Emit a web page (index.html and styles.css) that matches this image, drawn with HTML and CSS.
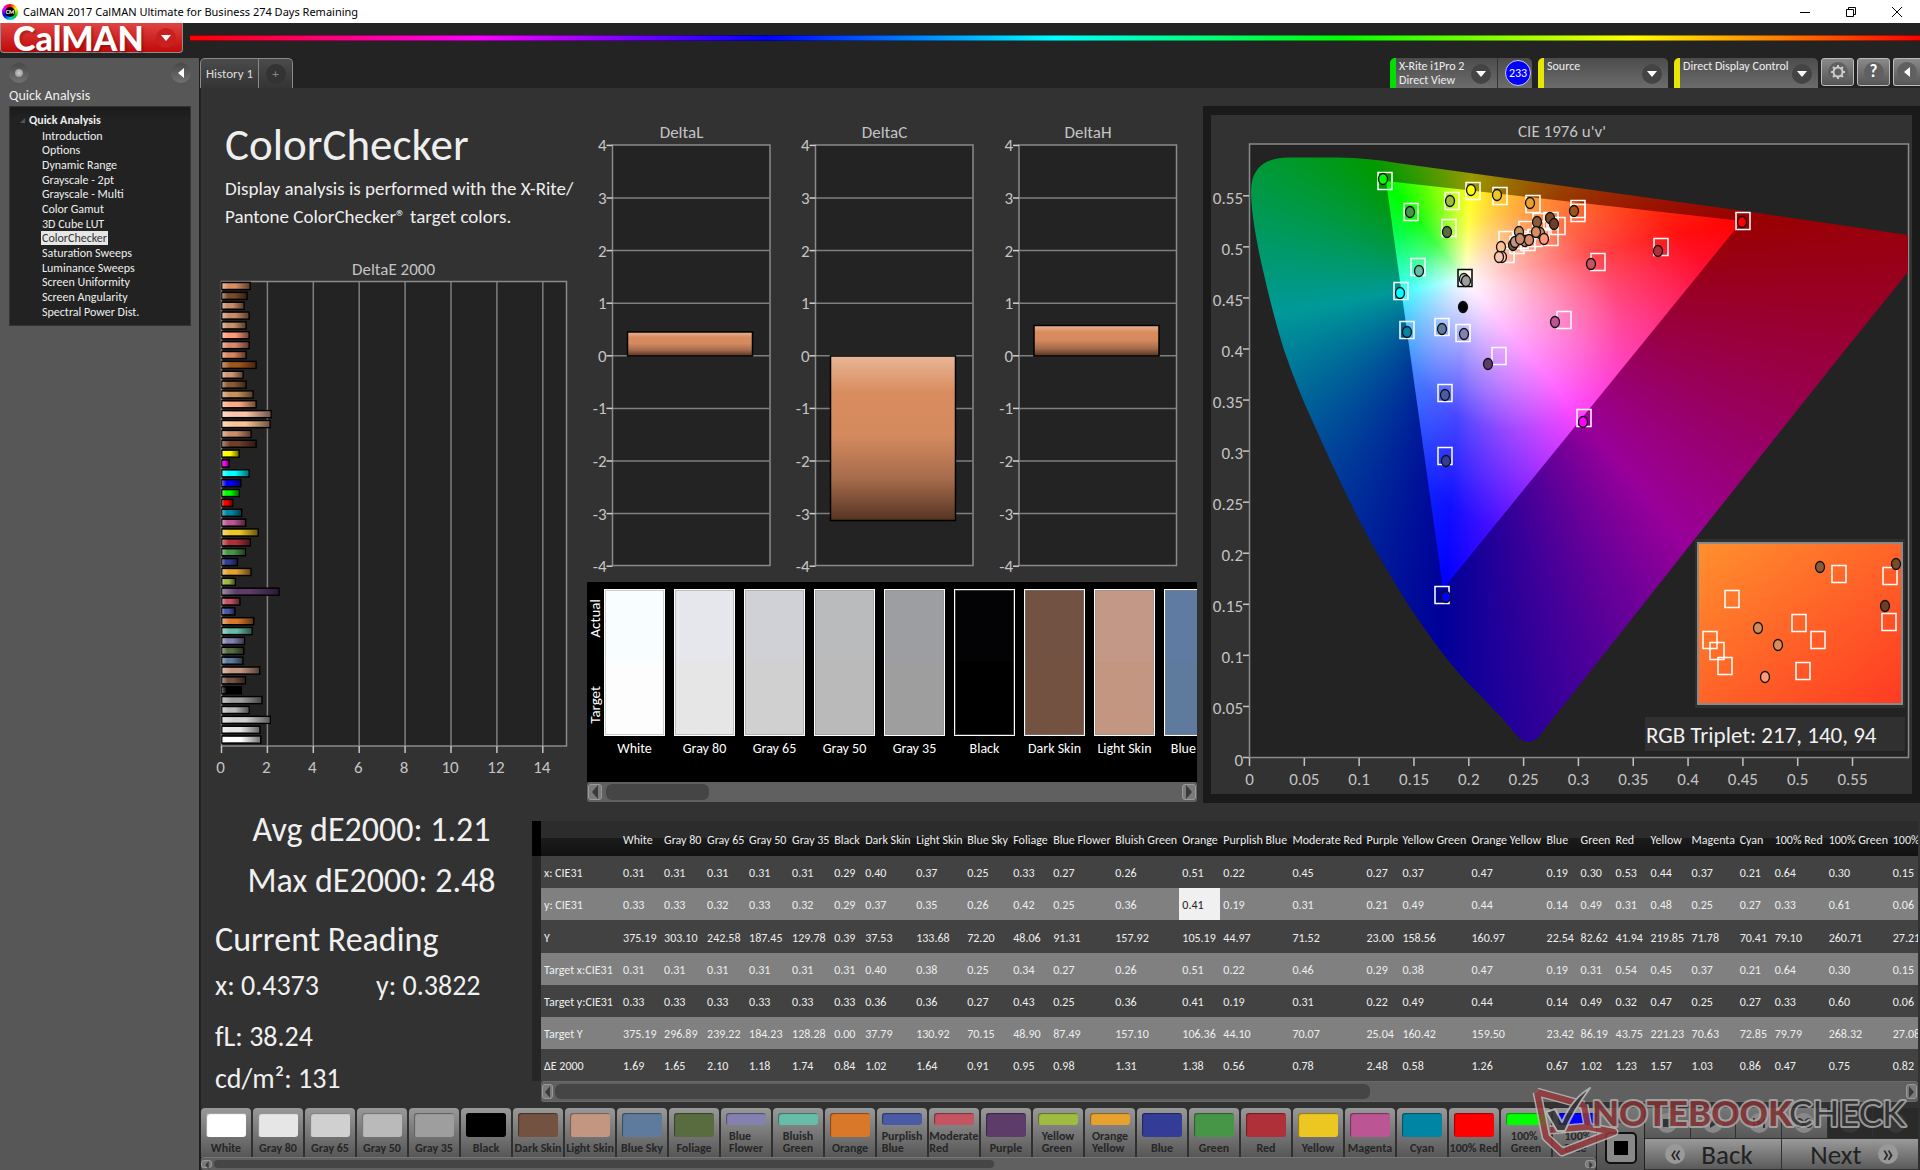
FILE: index.html
```html
<!DOCTYPE html>
<html lang="en">
<head>
<meta charset="utf-8">
<meta name="viewport" content="width=device-width, initial-scale=1">
<title>CalMAN 2017 CalMAN Ultimate for Business 274 Days Remaining</title>
<link rel="stylesheet" href="styles.css">
</head>
<body>
<header class="titlebar">
  <span class="app-icon">CM</span>
  <span class="titlebar-text">CalMAN 2017 CalMAN Ultimate for Business 274 Days Remaining</span>
  <div class="window-controls">
    <button type="button" aria-label="Minimize"><svg width="12" height="12" viewBox="0 0 12 12"><path d="M1 6.500h10"/></svg></button>
    <button type="button" aria-label="Restore"><svg width="12" height="12" viewBox="0 0 12 12"><path d="M1.500 3.500h7v7h-7zM3.500 3.500v-2h7v7h-2"/></svg></button>
    <button type="button" aria-label="Close"><svg width="12" height="12" viewBox="0 0 12 12"><path d="M1 1l10 10M11 1L1 11"/></svg></button>
  </div>
</header>
<div class="brandbar">
  <button type="button" class="brand">CalMAN<span class="round-arrow"><svg width="10" height="6" viewBox="0 0 10 6"><path d="M0 0h10L5 6z"/></svg></span></button>
  <div class="rainbow"></div>
</div>
<div class="shell">
  <aside class="sidebar">
    <div class="sidebar-tools">
      <button type="button" class="round" aria-label="Pin"><span class="bead"></span></button>
      <button type="button" class="round" aria-label="Collapse"><svg width="6" height="10" viewBox="0 0 6 10"><path d="M6 0v10L0 5z"/></svg></button>
    </div>
    <h2 class="sidebar-title">Quick Analysis</h2>
    <nav class="tree">
      <p class="tree-root"><svg width="5" height="5" viewBox="0 0 5 5"><path d="M5 0v5H0z"/></svg>Quick Analysis</p>
      <ul>
        <li><a href="#">Introduction</a></li>
        <li><a href="#">Options</a></li>
        <li><a href="#">Dynamic Range</a></li>
        <li><a href="#">Grayscale - 2pt</a></li>
        <li><a href="#">Grayscale - Multi</a></li>
        <li><a href="#">Color Gamut</a></li>
        <li><a href="#">3D Cube LUT</a></li>
        <li><a href="#" class="current">ColorChecker</a></li>
        <li><a href="#">Saturation Sweeps</a></li>
        <li><a href="#">Luminance Sweeps</a></li>
        <li><a href="#">Screen Uniformity</a></li>
        <li><a href="#">Screen Angularity</a></li>
        <li><a href="#">Spectral Power Dist.</a></li>
      </ul>
    </nav>
  </aside>
  <main class="main">
    <div class="tabbar">
      <div class="tabs">
        <button type="button" class="tab">History 1</button>
        <button type="button" class="tab tab-add" aria-label="Add history"><span>+</span></button>
      </div>
      <div class="devices">
        <div class="device device-meter">
          <button type="button" class="device-main"><span>X-Rite i1Pro 2<br>Direct View</span><i class="drop"><svg width="10" height="6" viewBox="0 0 10 6"><path d="M0 0h10L5 6z"/></svg></i></button>
          <button type="button" class="device-count">233</button>
        </div>
        <div class="device device-source">
          <button type="button" class="device-main"><span>Source</span><i class="drop"><svg width="10" height="6" viewBox="0 0 10 6"><path d="M0 0h10L5 6z"/></svg></i></button>
        </div>
        <div class="device device-display">
          <button type="button" class="device-main"><span>Direct Display Control</span><i class="drop"><svg width="10" height="6" viewBox="0 0 10 6"><path d="M0 0h10L5 6z"/></svg></i></button>
        </div>
        <button type="button" class="tool" aria-label="Settings"><span><svg width="16" height="16" viewBox="0 0 16 16" class="gear"><circle cx="8" cy="8" r="4.500"/><path d="M8 1v2.500M8 12.500V15M1 8h2.500M12.500 8H15M3 3l1.800 1.800M11.200 11.200L13 13M13 3l-1.800 1.800M4.800 11.200L3 13"/></svg></span></button>
        <button type="button" class="tool" aria-label="Help"><span>?</span></button>
        <button type="button" class="tool tool-cut" aria-label="Collapse panel"><span><svg width="6" height="10" viewBox="0 0 6 10"><path d="M6 0v10L0 5z"/></svg></span></button>
      </div>
    </div>
    <div class="charts">
      <section class="col-intro">
        <h1>ColorChecker</h1>
        <p>Display analysis is performed with the X-Rite/<br>Pantone ColorChecker® target colors.</p>
        <svg class="chart" id="delta-e" viewBox="200 235 387 568" role="img" aria-label="DeltaE 2000 per patch"></svg>
      </section>
      <section class="col-delta">
        <svg class="chart" id="deltas" viewBox="587 88 613 494" role="img" aria-label="DeltaL, DeltaC and DeltaH"></svg>
        <div class="compare">
          <div class="compare-axis"><span>Actual</span><span>Target</span></div>
          <div class="compare-list" id="compare"></div>
        </div>
        <div class="scroll scroll-compare"><button type="button" class="arrow" aria-label="Scroll left"><svg width="6" height="14" viewBox="0 0 6 14"><path d="M6 0v14L0 7z"/></svg></button><span class="thumb"></span><button type="button" class="arrow" aria-label="Scroll right"><svg width="6" height="14" viewBox="0 0 6 14"><path d="M0 0v14l6-7z"/></svg></button></div>
      </section>
      <section class="cie">
        <svg class="chart" id="cie" viewBox="1211 115 701 679" role="img" aria-label="CIE 1976 u'v' diagram"></svg>
      </section>
    </div>
    <div class="results">
      <section class="readings">
        <div class="summary"><p>Avg dE2000: 1.21</p><p>Max dE2000: 2.48</p></div>
        <h2>Current Reading</h2>
        <div class="pair"><span>x: 0.4373</span><span>y: 0.3822</span></div>
        <p class="value value-first">fL: 38.24</p>
        <p class="value">cd/m²: 131</p>
      </section>
      <section class="grid-wrap">
        <table class="grid"><colgroup id="cols"></colgroup><thead id="head"></thead><tbody id="rows"></tbody></table>
        <div class="scroll scroll-grid"><button type="button" class="arrow" aria-label="Scroll left"><svg width="5" height="12" viewBox="0 0 6 14"><path d="M6 0v14L0 7z"/></svg></button><span class="thumb"></span><button type="button" class="arrow" aria-label="Scroll right"><svg width="5" height="12" viewBox="0 0 6 14"><path d="M0 0v14l6-7z"/></svg></button></div>
      </section>
    </div>
    <footer class="dock">
      <div class="patches-wrap">
        <div class="patches" id="patches"></div>
        <div class="scroll scroll-patches"><button type="button" class="arrow" aria-label="Scroll left"><svg width="4" height="8" viewBox="0 0 6 14"><path d="M6 0v14L0 7z"/></svg></button><span class="thumb"></span><button type="button" class="arrow" aria-label="Scroll right"><svg width="4" height="8" viewBox="0 0 6 14"><path d="M0 0v14l6-7z"/></svg></button></div>
      </div>
      <div class="stopper">
        <button type="button" class="up" aria-label="Expand"><svg width="12" height="7" viewBox="0 0 12 7"><path d="M6 0l6 7H0z"/></svg></button>
        <button type="button" class="stop" aria-label="Stop"><span></span></button>
      </div>
      <div class="transport">
        <div class="media">
          <button type="button" aria-label="Stop reading"><span><svg width="12" height="12" viewBox="0 0 12 12"><path d="M2 2h8v8H2z"/></svg></span></button>
          <button type="button" aria-label="Play"><span><svg width="12" height="12" viewBox="0 0 12 12"><path d="M3 1l8 5-8 5z"/></svg></span></button>
          <button type="button" aria-label="Step"><span><svg width="12" height="12" viewBox="0 0 12 12"><path d="M0 1h2v10H0zM10 1h2v10h-2zM4 2l5 4-5 4z"/></svg></span></button>
          <button type="button" aria-label="Continuous"><span><svg width="16" height="12" viewBox="0 0 16 12"><path class="loop" d="M8 6C6 3 5 2 3.500 2a4 4 0 000 8C5 10 6 9 8 6s3-4 4.500-4a4 4 0 010 8C11 10 10 9 8 6z"/></svg></span></button>
          <button type="button" class="off" aria-label="Repeat"><span></span></button>
          <button type="button" class="off" aria-label="More"><span></span></button>
        </div>
        <div class="steps">
          <button type="button"><span>«</span>Back</button>
          <button type="button">Next<span>»</span></button>
        </div>
      </div>
      <svg class="watermark" width="390" height="86" viewBox="0 0 390 86" role="img" aria-label="Notebookcheck">
        <g fill="none" stroke-linejoin="round" opacity=".85">
          <path stroke="#bbb" stroke-width="9" d="M9 11L56 24M9 11L18 56 34 71 86 51 60 46 22 49M56 24L60 46"/>
          <path stroke="#963a3c" stroke-width="6" d="M9 11L56 24M9 11L18 56 34 71 86 51 60 46 22 49M56 24L60 46"/>
          <path class="tick" stroke="#bbb" stroke-width="2" d="M18 31l9-3 7 13C40 27 50 14 62 7 54 18 43 35 37 50h-8z"/>
        </g>
        <text x="64" y="45" class="wm-a">NOTEBOOK</text><text x="261" y="45" class="wm-b">CHECK</text>
      </svg>
    </footer>
  </main>
</div>
<script src="app.js"></script>
</body>
</html>
```
FILE: styles.css
```css
* { box-sizing: border-box; }
body {
  margin: 0; min-height: 100vh; display: flex; flex-direction: column; overflow-x: hidden;
  background: #232323; color: #eee;
  font-family: Carlito, Calibri, Lato, sans-serif; font-size: 12px; line-height: 15px;
}
button { border: 0; padding: 0; margin: 0; background: none; color: inherit; font: inherit; }
h1, h2, p, ul { margin: 0; padding: 0; font-weight: 400; }
ul { list-style: none; }
a { color: inherit; text-decoration: none; }
svg { display: block; }
path { fill: currentColor; }

.titlebar { display: flex; align-items: center; height: 23px; padding-left: 2px; gap: 5px; background: #fff; color: #000; }
.app-icon {
  width: 16px; height: 16px; border-radius: 8px; border: 3px solid transparent; text-align: center;
  background: radial-gradient(#000, #000) padding-box, conic-gradient(#f00, #ff0, #0c0, #0cf, #00f, #f0f, #f00) border-box;
  color: #fff; font-size: 6px; line-height: 10px; font-weight: 700;
}
.titlebar-text { font-family: "Noto Sans", "Open Sans", sans-serif; font-size: 11px; }
.window-controls { display: flex; margin-left: auto; }
.window-controls button { width: 46px; height: 23px; display: grid; place-items: center; }
.window-controls path { fill: none; stroke: #000; }

.brandbar { display: flex; gap: 7px; height: 35px; }
.brand {
  width: 183px; height: 30px; display: flex; align-items: center; justify-content: space-between; padding: 0 6px 0 12px;
  border: solid #8f8f8f; border-width: 0 1px 1px; border-radius: 0 0 4px 4px;
  background: linear-gradient(#e04443, #c00a0a); color: #fff;
  font: 900 34px/28px Lato, sans-serif; text-shadow: 2px 2px 2px #5005;
}
.round-arrow { width: 20px; height: 20px; border-radius: 10px; background: #c91f1f; display: grid; place-items: center; }
.rainbow { flex: 1; height: 6px; margin-top: 12px; border: solid #0006; border-width: 1px 0; background: linear-gradient(90deg, #f00, #f0f, #00f, #0ff, #0f0, #ff0, #f00); }

.shell { flex: 1; display: grid; grid-template-columns: 200px minmax(0, 1fr); }
.sidebar { background: #575757; padding: 5px 8px 5px 9px; border-right: 1px solid #1c1c1c; }
.sidebar-tools { display: flex; justify-content: space-between; padding-bottom: 3px; }
.round { width: 20px; height: 20px; border-radius: 10px; display: grid; place-items: center; color: #fff; background: linear-gradient(#484848, #727272); }
.bead { width: 8px; height: 8px; border-radius: 4px; background: radial-gradient(#ccc, #888); }
.sidebar-title { font-size: 14px; line-height: 20px; }
.tree { height: 220px; padding: 6px 0 0 10px; border: 1px solid #333; background: linear-gradient(#1a1a1a, #222 12px); }
.tree-root { display: flex; align-items: center; gap: 4px; line-height: 14px; font-weight: 700; }
.tree-root svg { color: #555; }
.tree ul { padding: 2px 0 0 21px; }
.tree li { height: 15px; line-height: 15px; }
.tree li:nth-child(6n+1), .tree li:nth-child(6n+4) { height: 14px; }
.tree a { display: inline-block; padding: 0 1px; line-height: 14px; }
.tree .current { background: #e6e6e6; color: #333; }

.main { position: relative; display: flex; flex-direction: column; background: #323232; min-width: 0; }
.tabbar { display: flex; justify-content: space-between; height: 30px; background: #232323; }
.tabs { display: flex; border: solid #8a8a8a; border-width: 1px 1px 0; border-radius: 5px 5px 0 0; background: linear-gradient(#4b4b4b, #343434); }
.tab { width: 57px; font-size: 13px; color: #ddd; }
.tab-add { width: 34px; border-left: 1px solid #8a8a8a; display: grid; place-items: center; }
.tab-add span { width: 20px; height: 20px; border-radius: 10px; background: #333; color: #888; line-height: 20px; }
.devices { display: flex; gap: 3px; }
.device { display: flex; height: 30px; margin-right: 3px; border-left: 6px solid #e6e600; border-radius: 5px 5px 0 0; background: linear-gradient(#4c4c4c, #6c6c6c); }
.device-meter { border-color: #00e000; width: 142px; }
.device-source { width: 130px; }
.device-display { width: 144px; margin-right: 0; }
.device-main { flex: 1; display: flex; justify-content: space-between; align-items: flex-start; padding: 1px 6px 0 3px; text-align: left; line-height: 14px; white-space: nowrap; }
.drop { width: 20px; height: 20px; margin-top: 5px; border-radius: 10px; background: #444; color: #fff; display: grid; place-items: center; flex: none; }
.device-display .drop { margin-left: -4px; }
.device-meter .device-main { border-right: 1px solid #333; }
.device-count { width: 26px; height: 26px; margin: 2px 1px 0 7px; border: 1px solid #ccd; border-radius: 13px; background: #00f; color: #fff; font-size: 12px; }
.tool { width: 33px; height: 28px; border: 1px solid #bbb; border-radius: 3px; background: linear-gradient(#8a8a8a, #555); display: grid; place-items: center; }
.tool span { width: 20px; height: 20px; border-radius: 10px; background: #606060; display: grid; place-items: center; font: 700 17px/20px Carlito, sans-serif; color: #fff; }
.tool-cut { width: 27px; border-right: 0; border-radius: 3px 0 0 3px; }
.gear circle, .gear path { fill: none; stroke: #ccc; stroke-width: 2; }

.charts { display: grid; grid-template-columns: minmax(0, 387fr) minmax(0, 613fr) minmax(0, 720fr); align-items: start; box-shadow: inset 1px 0 #222; }
.chart { width: 100%; height: auto; }
.col-intro { padding-top: 27px; }
.col-intro h1 { padding-left: 25px; font-size: 45px; line-height: 60px; }
.col-intro p { padding: 0 0 4px 25px; font-size: 19px; line-height: 28px; white-space: nowrap; }
.axis-title, .axis-label { fill: #c4c4c4; font-size: 17px; }
.triplet { fill: #f0f0f0; font-size: 23px; }
.hues { width: 658px; height: 613px; }
.hues-dark { background: conic-gradient(from 0deg at 216px 136px, #8d9900, #999900 3deg, #990000 78deg, #990099 140deg, #000099 184deg, #009999 260deg, #009900 321deg, #8d9900); }
.hues-light { background: conic-gradient(from 0deg at 216px 136px, #f0ff00, #ffff00 3deg, #ff7800 43deg, #ff0000 78deg, #ff00ff 140deg, #0000ff 184deg, #00ffff 260deg, #00ff00 321deg, #f0ff00); }

.compare { display: flex; height: 200px; margin-right: 3px; overflow: hidden; background: #000; color: #fff; }
.compare-axis { width: 17px; flex: none; height: 150px; padding: 17px 0 8px; display: flex; flex-direction: column; justify-content: space-between; }
.compare-axis span { writing-mode: vertical-rl; transform: rotate(180deg); font-size: 15px; line-height: 17px; }
.compare-list { display: flex; gap: 9px; padding-top: 7px; }
.compare-item { flex: none; width: 61px; text-align: center; font-size: 14px; line-height: 26px; white-space: nowrap; }
.compare-chip { height: 147px; border: 1px solid #fff; outline: 1px solid #8886; outline-offset: -2px; }

.scroll { display: flex; align-items: center; border-radius: 3px; background: #606060; }
.scroll .thumb { background: #454545; border-radius: 6px; height: calc(100% - 4px); }
.arrow { width: 14px; height: calc(100% - 4px); border: 1px solid #999; border-radius: 3px; background: #7a7a7a; color: #3a3a3a; display: grid; place-items: center; }
.arrow:last-child { margin-left: auto; }
.scroll-compare { height: 20px; margin-right: 3px; padding: 0 1px; gap: 4px; }
.scroll-compare .thumb { width: 17%; }

.cie { margin: 18px 0 0 3px; border: solid #1a1a1a; border-width: 9px 8px; }

.results { flex: 1; display: grid; grid-template-columns: 332px minmax(0, 1fr); box-shadow: inset 1px 0 #222; }
.readings { padding: 1px 0 0 15px; font-size: 28px; line-height: 42px; color: #f0f0f0; }
.summary { width: 313px; text-align: center; font-size: 34px; line-height: 51px; }
.readings h2 { margin-top: 8px; font-size: 34px; line-height: 51px; }
.pair { display: grid; grid-template-columns: 161px 1fr; }
.value-first { margin-top: 9px; }
.grid-wrap { padding-top: 18px; margin-right: 2px; overflow: hidden; }
.grid { width: 1391px; table-layout: fixed; border-collapse: collapse; font-size: 12px; white-space: nowrap; }
.grid th, .grid td { height: 32px; padding: 3px 0 0 3px; text-align: left; font-weight: 400; overflow: visible; }
.grid thead th { height: 35px; background: linear-gradient(#2c2c2c 50%, #1b1b1b 50%, #111); }
.grid thead th:first-child { background: #000; }
.grid tbody tr { background: #424242; }
.grid tbody tr:nth-child(even) { background: #808080; }
.grid tbody tr:nth-child(3) td { height: 33px; }
.grid tbody td:first-child { background: #262626; }
.grid td.picked { background: #f0f0f0; color: #222; }
.scroll-grid { height: 21px; margin-left: 9px; padding: 0 1px; gap: 2px; border: 1px solid #6a6a6a; border-width: 1px 0; }
.scroll-grid .arrow, .scroll-patches .arrow { width: 11px; }
.scroll-grid .thumb { width: 815px; max-width: 60%; }

.dock { position: relative; display: grid; grid-template-columns: minmax(0, 1395px) 49px minmax(270px, 1fr); height: 62px; background: #303030; border-left: 1px solid #222; padding-right: 2px; }
.patches-wrap { overflow: hidden; }
.patches { display: flex; gap: 2px; height: 49px; }
.patch { flex: none; width: 50px; height: 49px; padding: 5px 0 3px; border-radius: 4px 4px 0 0; background: linear-gradient(#999, #575757); color: #262626; font-weight: 700; line-height: 12px; display: flex; flex-direction: column; align-items: center; gap: 5px; }
.patch-chip { width: 40px; flex: 1; border-radius: 3px; box-shadow: inset 1px 1px 1px #0006; }
.patch-name { text-align: left; white-space: pre; }
.scroll-patches { height: 13px; gap: 2px; border-top: 1px solid #777; }
.scroll-patches .thumb { width: 780px; max-width: 56%; }
.stopper { display: flex; flex-direction: column; align-items: center; gap: 6px; padding-top: 5px; border: solid #222; border-width: 0 1px; background: linear-gradient(#777, #505050); }
.up { height: 13px; color: #444; display: grid; place-items: center; }
.stop { width: 32px; height: 32px; border: 2px solid #111; border-radius: 5px; background: #888; display: grid; place-items: center; }
.stop span { width: 14px; height: 14px; background: #000; }
.transport { display: flex; flex-direction: column; gap: 1px; }
.media { display: grid; grid-template-columns: repeat(6, 1fr); gap: 1px; height: 30px; color: #333; }
.media button { background: linear-gradient(#777, #585858); display: grid; place-items: center; }
.media span { width: 20px; height: 20px; border-radius: 10px; background: #888; display: grid; place-items: center; }
.media .off { background: #2a2a2a; }
.media .off span { background: #363636; }
.loop { fill: none; stroke: #333; stroke-width: 2; }
.steps { display: grid; grid-template-columns: 1fr 1fr; gap: 1px; height: 30px; color: #222; font-size: 27px; }
.steps button { display: flex; align-items: center; justify-content: center; gap: 16px; padding: 0 8px 0 0; background: linear-gradient(#9a9a9a, #5a5a5a); }
.steps button + button { padding: 0 0 0 8px; }
.steps span { width: 20px; height: 20px; border-radius: 10px; background: #999; line-height: 17px; }
.watermark { position: absolute; right: 2px; bottom: 3px; }
.watermark path { fill: none; }
.watermark .tick { fill: #333; }
.wm-a, .wm-b { font-family: Lato, sans-serif; font-size: 35px; paint-order: stroke; stroke: #aaa; stroke-width: 4px; stroke-linejoin: round; opacity: .85; }
.wm-a { font-weight: 900; fill: #843234; }
.wm-b { font-weight: 400; fill: #333; }
```
FILE: app.js
```js
const $ = id => document.getElementById(id);
const rect = (x, y, w, h, more) => `<rect x="${x}" y="${y}" width="${w}" height="${h}" ${more}/>`;
const line = (x1, y1, x2, y2, c) => `<line x1="${x1}" y1="${y1}" x2="${x2}" y2="${y2}" stroke="${c}" stroke-width="1.5"/>`;
const text = (x, y, s, anchor = "middle", cls = "axis-label") => `<text x="${x}" y="${y}" text-anchor="${anchor}" class="${cls}">${s}</text>`;

/* Patches: name, colour, table column width, then x, y, Y, target x, target y, target Y, dE */
const patches = [
  ["White", "#ffffff", 41, "0.31 0.33 375.19 0.31 0.33 375.19 1.69"],
  ["Gray 80", "#e6e6e6", 43, "0.31 0.33 303.10 0.31 0.33 296.89 1.65"],
  ["Gray 65", "#d0d0d0", 42, "0.31 0.32 242.58 0.31 0.33 239.22 2.10"],
  ["Gray 50", "#bababa", 43, "0.31 0.33 187.45 0.31 0.33 184.23 1.18"],
  ["Gray 35", "#9e9e9e", 42, "0.31 0.32 129.78 0.31 0.33 128.28 1.74"],
  ["Black", "#000000", 31, "0.29 0.29 0.39 0.31 0.33 0.00 0.84"],
  ["Dark Skin", "#735242", 51, "0.40 0.37 37.53 0.40 0.36 37.79 1.02"],
  ["Light Skin", "#c39682", 51, "0.37 0.35 133.68 0.38 0.36 130.92 1.64"],
  ["Blue Sky", "#5e7b9d", 46, "0.25 0.26 72.20 0.25 0.27 70.15 0.91"],
  ["Foliage", "#586c40", 40, "0.33 0.42 48.06 0.34 0.43 48.90 0.95"],
  ["Blue Flower", "#8480b0", 62, "0.27 0.25 91.31 0.27 0.25 87.49 0.98"],
  ["Bluish Green", "#65bda8", 67, "0.26 0.36 157.92 0.26 0.36 157.10 1.31"],
  ["Orange", "#d97829", 41, "0.51 0.41 105.19 0.51 0.41 106.36 1.38"],
  ["Purplish Blue", "#4a5ba5", 69, "0.22 0.19 44.97 0.22 0.19 44.10 0.56"],
  ["Moderate Red", "#c45461", 74, "0.45 0.31 71.52 0.46 0.31 70.07 0.78"],
  ["Purple", "#5d3c6a", 36, "0.27 0.21 23.00 0.29 0.22 25.04 2.48"],
  ["Yellow Green", "#9fbc40", 69, "0.37 0.49 158.56 0.38 0.49 160.42 0.58"],
  ["Orange Yellow", "#e6a12e", 75, "0.47 0.44 160.97 0.47 0.44 159.50 1.26"],
  ["Blue", "#333d97", 34, "0.19 0.14 22.54 0.19 0.14 23.42 0.67"],
  ["Green", "#479648", 35, "0.30 0.49 82.62 0.31 0.49 86.19 1.02"],
  ["Red", "#b03039", 35, "0.53 0.31 41.94 0.54 0.32 43.75 1.23"],
  ["Yellow", "#ecc721", 41, "0.44 0.48 219.85 0.45 0.47 221.23 1.57"],
  ["Magenta", "#bb5594", 48, "0.37 0.25 71.78 0.37 0.25 70.63 1.03"],
  ["Cyan", "#0086a5", 35, "0.21 0.27 70.41 0.21 0.27 72.85 0.86"],
  ["100% Red", "#ff0000", 54, "0.64 0.33 79.10 0.64 0.33 79.79 0.47"],
  ["100% Green", "#00ff00", 64, "0.30 0.61 260.71 0.30 0.60 268.32 0.75"],
  ["100% Blue", "#0000ff", 33, "0.15 0.06 27.21 0.15 0.06 27.08 0.82"]
];

/* Results table */
$("cols").innerHTML = [9, 79, ...patches.map(p => p[2])].map(w => `<col style="width:${w}px">`).join("");
$("head").innerHTML = "<tr><th></th><th></th>" + patches.map((p, i) => `<th>${i === 26 ? "100%" : p[0]}</th>`).join("") + "</tr>";
$("rows").innerHTML = ["x: CIE31", "y: CIE31", "Y", "Target x:CIE31", "Target y:CIE31", "Target Y", "ΔE 2000"].map((name, r) =>
  `<tr><td></td><th>${name}</th>` + patches.map((p, c) => `<td${r === 1 && c === 12 ? ' class="picked"' : ""}>${p[3].split(" ")[r]}</td>`).join("") + "</tr>").join("");

/* Patch buttons and the actual / target comparison */
const wrapped = ["Blue Flower", "Bluish Green", "Purplish Blue", "Moderate Red", "Yellow Green", "Orange Yellow", "100% Green", "100% Blue"];
$("patches").innerHTML = patches.map(p =>
  `<button type="button" class="patch"><span class="patch-chip" style="background:${p[1]}"></span><span class="patch-name">${wrapped.includes(p[0]) ? p[0].replace(" ", "\n") : p[0]}</span></button>`).join("");
const actual = ["#f8fdff", "#e6e7ec", "#d0d1d6", "#babbbd", "#9d9ea2", "#030305", "#725243", "#c49887", "#607ba2"];
$("compare").innerHTML = actual.map((a, i) =>
  `<div class="compare-item"><div class="compare-chip" style="background:linear-gradient(${a} 50%,${i ? patches[i][1] : "#fdfdfd"} 50%)"></div>${patches[i][0]}</div>`).join("");

/* DeltaE 2000 */
const skin = "#d98c5e #7a4a28 #c98a68 #c88c6c #c8906c #ff9a78 #d8896c #d98560 #a0541e #cf9474 #8a5a34 #c8905c #ffaa80 #fcc4a8 #fcc494 #cf8c6a #6e3e28 #ffff00 #ff00ff #00ffff".split(" ");
const skinLen = [28, 25, 22, 27, 24, 27, 27, 24, 34, 21, 24, 31, 34, 49, 48, 29, 34, 17, 7, 27];
const bars = skin.map((c, i) => [c, skinLen[i]]).concat(patches.slice().reverse().map(p => [p[1], p[3].split(" ")[6] * 22.95]));
let s = rect(221.5, 281.5, 345, 464.5, 'fill="#232323" stroke="#8a8a8a" stroke-width="1.5"');
for (let v = 0; v <= 14; v += 2) {
  const x = 221.5 + v * 22.95;
  if (v) s += line(x, 282, x, 746, "#7f7f7f");
  s += line(x, 746, x, 753, "#c4c4c4") + text(x - 1, 773, v);
}
bars.forEach(([c, w], i) => {
  s += rect(222, 282.5 + i * 9.86, w, 7, `fill="${c}" stroke="#000" stroke-width="1.5"`);
  s += rect(222, 283.2 + i * 9.86, w - 0.7, 5.6, 'fill="url(#shine-x)"');
});
$("delta-e").innerHTML = '<defs><linearGradient id="shine-x"><stop offset="0" stop-color="#fff" stop-opacity=".4"/><stop offset=".25" stop-color="#fff" stop-opacity="0"/><stop offset=".5" stop-opacity="0"/><stop offset="1" stop-opacity=".55"/></linearGradient></defs>' + text(393.5, 275, "DeltaE 2000") + s;

/* DeltaL, DeltaC, DeltaH */
s = '<defs><linearGradient id="body" x2="0" y2="1"><stop offset="0" stop-color="#e8b698"/><stop offset=".22" stop-color="#d98c5e"/><stop offset=".48" stop-color="#d48a5e"/><stop offset=".75" stop-color="#a56b4b"/><stop offset="1" stop-color="#553322"/></linearGradient></defs>';
[["DeltaL", 612.5, 332, 24], ["DeltaC", 815.5, 356, 164.5], ["DeltaH", 1019, 325.5, 30.5]].forEach(([name, x, by, bh]) => {
  s += text(x + 69, 138, name) + rect(x, 145, 157.5, 420.5, 'fill="#232323" stroke="#8a8a8a" stroke-width="1.5"');
  for (let v = 4; v >= -4; v--) {
    const y = 355.8 - v * 52.6;
    if (Math.abs(v) < 4) s += line(x, y, x + 157, y, "#7f7f7f");
    s += line(x - 6, y, x, y, "#d0d0d0") + text(x - 6, y + 6, v, "end");
  }
  s += rect(x + 15, by, 125, bh, 'fill="url(#body)" stroke="#000" stroke-width="1.5"');
});
$("deltas").innerHTML = s;

/* CIE 1976 u'v' */
const X = u => 1249.5 + u * 1096.4, Y = v => 757.5 - v * 1021.3;
const locus = "M1529 742C1518 742 1512 727 1498 714C1484 699 1475 690 1466 681Q1443 657 1407 603Q1380 560 1358 518Q1333 468 1312 420Q1297 388 1284 350Q1273 315 1262 266T1251 190Q1252 157 1290 157.5L1338 157.5Q1370 158 1397 163L1751 212L1908 235V272L1845 350L1694 540L1540 735Q1535 742 1529 742Z";
const gamut = "M1386 181L1742 221L1443 589Z";
s = `<defs><clipPath id="locus"><path d="${locus}"/></clipPath><clipPath id="gamut"><path d="${gamut}"/></clipPath>
<radialGradient id="white" gradientUnits="userSpaceOnUse" cx="1568" cy="375" r="240" fx="1466" fy="280"><stop offset="0" stop-color="#fff"/><stop offset=".2" stop-color="#fff" stop-opacity=".66"/><stop offset=".45" stop-color="#fff" stop-opacity=".28"/><stop offset=".75" stop-color="#fff" stop-opacity=".06"/><stop offset="1" stop-color="#fff" stop-opacity="0"/></radialGradient>
<linearGradient id="zoomed" x2="1" y2="1"><stop offset="0" stop-color="#ff902e"/><stop offset=".5" stop-color="#ff6428"/><stop offset="1" stop-color="#ff3a22"/></linearGradient></defs>`;
s += text(1562, 137, "CIE 1976 u'v'") + rect(1249.5, 144, 659, 613.5, 'fill="#232323" stroke="#8a8a8a" stroke-width="1.5"');
s += '<g clip-path="url(#locus)"><foreignObject x="1250" y="144" width="658" height="613"><div class="hues hues-dark"></div></foreignObject></g>';
s += '<g clip-path="url(#gamut)"><foreignObject x="1250" y="144" width="658" height="613"><div class="hues hues-light"></div></foreignObject></g>';
s += `<path d="${gamut}" style="fill:url(#white)"/>`;
for (let i = 0; i <= 11; i++) {
  const v = i / 20;
  s += line(1243, Y(v), 1249, Y(v), "#c4c4c4") + text(1243, Y(v) + 8, v, "end") + line(X(v), 758, X(v), 766, "#c4c4c4") + text(X(v), 785, v);
}
const target = (x, y, c = "#fff") => rect(x - 7, y - 8.5, 14, 17, `fill="none" stroke="${c}" stroke-width="1.5"`);
const dot = (x, y, c) => `<ellipse cx="${x}" cy="${y}" rx="4.5" ry="5.5" fill="${c}" stroke="#111" stroke-width="1.3"/>`;
const targets = [[1385,181],[1473,191],[1452,201],[1411,212],[1449,228],[1500,196],[1533,204],[1578,209],[1578,213],[1743,221],[1661,247],[1598,262],[1418,267],[1401,291],[1407,330],[1442,327],[1463,333],[1564,320],[1499,356],[1540,222],[1551,221],[1558,226],[1526,230],[1551,237],[1506,240],[1517,245],[1521,240],[1528,242],[1535,238],[1507,254],[1542,230],[1445,393],[1445,456],[1584,418],[1442,595]];
const dots = [[1383,179,"#0f0"],[1471,190,"#ff0"],[1497,195,"#ecc721"],[1450,201,"#9fbc40"],[1410,212,"#479648"],[1447,232,"#586c40"],[1530,203,"#e6a12e"],[1574,211,"#a0521c"],[1742,222,"#f00"],[1658,251,"#b03039"],[1591,264,"#c45461"],[1419,271,"#65bda8"],[1400,293,"#0ff"],[1407,332,"#0086a5"],[1442,329,"#5e7b9d"],[1464,334,"#8480b0"],[1555,322,"#bb5594"],[1488,364,"#5d3c6a"],[1463,307,"#000"],[1464,279,"#ccc"],[1466,281,"#9d9d9d"],[1445,395,"#4a5ba5"],[1446,461,"#333d97"],[1583,422,"#f0f"],[1446,597,"#00f"],[1537,222,"#8a5a34"],[1550,218,"#7a4a28"],[1554,224,"#6e3e28"],[1519,232,"#c8905c"],[1540,233,"#c98a68"],[1536,232,"#d98c5e"],[1544,239,"#ff9a78"],[1513,245,"#735242"],[1515,242,"#c39682"],[1525,241,"#c8906c"],[1529,240,"#d8896c"],[1520,239,"#c88c6c"],[1501,247,"#fcc494"],[1502,257,"#fcc4a8"],[1499,257,"#fcc4a8"]];
s += targets.map(t => target(...t)).join("") + target(1465, 278, "#000") + dots.map(d => dot(...d)).join("");
s += rect(1695, 539, 210, 169, 'fill="#2f2f2f"') + rect(1698, 543, 204, 161, 'fill="url(#zoomed)" stroke="#8a8a8a" stroke-width="2"');
s += [[1732,599],[1839,574],[1890,576],[1799,623],[1818,640],[1889,622],[1710,640],[1717,651],[1725,666],[1803,671]].map(t => target(...t)).join("");
s += [[1820,567,"#8a5a34"],[1896,564,"#7a4a28"],[1885,606,"#6e3e28"],[1758,628,"#cf8c5c"],[1778,645,"#d98c5e"],[1765,677,"#ff9a78"]].map(d => dot(...d)).join("");
s += rect(1645, 717, 260, 34, 'fill="#303030"') + text(1646, 743, "RGB Triplet: 217, 140, 94", "start", "triplet");
$("cie").innerHTML = s;
```
